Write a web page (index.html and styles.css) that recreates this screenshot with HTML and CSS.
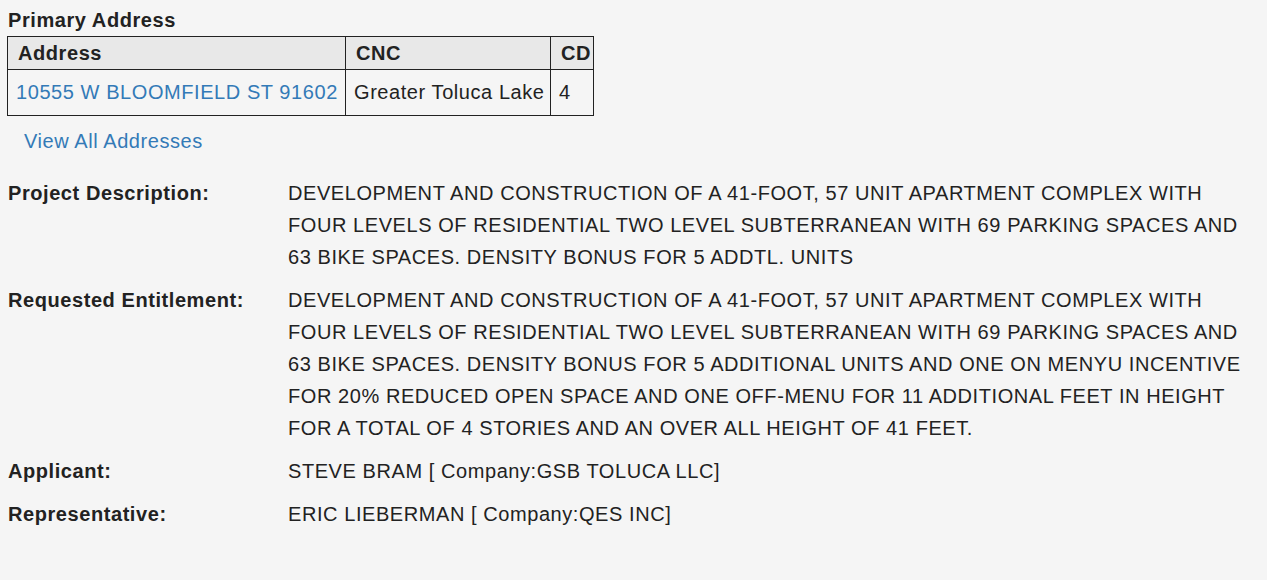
FILE: index.html
```html
<!DOCTYPE html>
<html>
<head>
<meta charset="utf-8">
<link rel="stylesheet" href="styles.css">
</head>
<body>
<div class="page">
  <h4 class="section-title">Primary Address</h4>
  <table class="addr-table">
    <colgroup>
      <col class="col-addr">
      <col class="col-cnc">
      <col class="col-cd">
    </colgroup>
    <thead>
      <tr><th>Address</th><th>CNC</th><th>CD</th></tr>
    </thead>
    <tbody>
      <tr><td><a href="#">10555 W BLOOMFIELD ST 91602</a></td><td>Greater Toluca Lake</td><td>4</td></tr>
    </tbody>
  </table>
  <div class="view-all"><a href="#">View All Addresses</a></div>
  <dl class="details">
    <dt>Project Description:</dt>
    <dd>DEVELOPMENT AND CONSTRUCTION OF A 41-FOOT, 57 UNIT APARTMENT COMPLEX WITH FOUR LEVELS OF RESIDENTIAL TWO LEVEL SUBTERRANEAN WITH 69 PARKING SPACES AND 63 BIKE SPACES. DENSITY BONUS FOR 5 ADDTL. UNITS</dd>
    <dt>Requested Entitlement:</dt>
    <dd>DEVELOPMENT AND CONSTRUCTION OF A 41-FOOT, 57 UNIT APARTMENT COMPLEX WITH FOUR LEVELS OF RESIDENTIAL TWO LEVEL SUBTERRANEAN WITH 69 PARKING SPACES AND 63 BIKE SPACES. DENSITY BONUS FOR 5 ADDITIONAL UNITS AND ONE ON MENYU INCENTIVE FOR 20% REDUCED OPEN SPACE AND ONE OFF-MENU FOR 11 ADDITIONAL FEET IN HEIGHT FOR A TOTAL OF 4 STORIES AND AN OVER ALL HEIGHT OF 41 FEET.</dd>
    <dt>Applicant:</dt>
    <dd>STEVE BRAM [ Company:GSB TOLUCA LLC]</dd>
    <dt>Representative:</dt>
    <dd>ERIC LIEBERMAN [ Company:QES INC]</dd>
  </dl>
</div>
</body>
</html>
```

FILE: styles.css
```css
html, body {
  margin: 0;
  padding: 0;
  background: #f5f5f5;
}
body {
  font-family: "Liberation Sans", Arial, Helvetica, sans-serif;
  font-size: 20px;
  letter-spacing: 0.57px;
  color: #222;
}
.page {
  padding: 8px 8px 0 8px;
  width: 1237px;
}
.section-title {
  margin: 0;
  font-size: 20px;
  font-weight: bold;
  line-height: 24px;
  padding-bottom: 4px;
}
.addr-table {
  border-collapse: collapse;
  margin-left: -1px;
  table-layout: fixed;
  width: 586px;
}
.col-addr { width: 338px; }
.col-cnc { width: 205px; }
.col-cd { width: 43px; }
.addr-table th,
.addr-table td {
  border: 1px solid #222;
  text-align: left;
  white-space: nowrap;
  overflow: hidden;
}
.addr-table th {
  background: #e8e8e8;
  font-weight: bold;
  height: 33px;
  padding: 0 0 0 10px;
  box-sizing: border-box;
}
.addr-table td {
  height: 46px;
  padding: 0 0 0 8px;
  box-sizing: border-box;
}
a {
  color: #337ab7;
  text-decoration: none;
}
.view-all {
  padding: 11px 0 0 16px;
  line-height: 28px;
}
.details {
  margin: 22px 0 0 0;
  display: grid;
  grid-template-columns: 280px 1fr;
  line-height: 32px;
}
.details dt {
  font-weight: bold;
  margin: 0 0 11px 0;
}
.details dd {
  margin: 0 0 11px 0;
}
```
